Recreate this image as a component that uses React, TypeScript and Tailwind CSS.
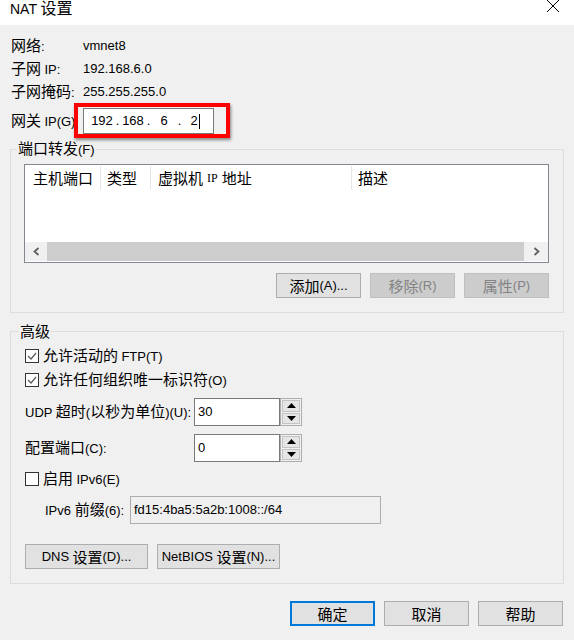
import React from 'react';

// Latin runs are drawn smaller than the CJK ones, like the Windows dialog font
const Lat: React.FC<{ children: React.ReactNode }> = ({ children }) => (
  <span className="font-['Liberation_Sans',sans-serif] text-[13px]">{children}</span>
);

const Check: React.FC<{ checked?: boolean }> = ({ checked }) => (
  <span className="w-[14px] h-[14px] border border-[#333333] bg-white flex items-center justify-center shrink-0">
    {checked && (
      <svg width="10" height="8" viewBox="0 0 10 8">
        <polyline points="1,4 4,7 9,1" fill="none" stroke="#5a5a5a" strokeWidth="1.2" />
      </svg>
    )}
  </span>
);

const Btn: React.FC<{ children: React.ReactNode; disabled?: boolean; primary?: boolean; w?: string }> = ({
  children,
  disabled,
  primary,
  w = 'w-[85px]',
}) => (
  <div
    className={
      w +
      ' h-[25px] flex items-center justify-center ' +
      (primary
        ? 'border-2 border-[#0078d7] bg-[#e1e1e1]'
        : disabled
        ? 'border border-[#bfbfbf] bg-[#cccccc] text-[#838383]'
        : 'border border-[#adadad] bg-[#e1e1e1]')
    }
  >
    {children}
  </div>
);

const Spin: React.FC<{ value: string }> = ({ value }) => (
  <div className="flex h-[28px]">
    <div className="w-[86px] h-full border border-[#7a7a7a] bg-white pl-[3px] pt-[2px] leading-[18px]">
      <Lat>{value}</Lat>
    </div>
    <div className="w-[22px] h-full border border-[#adadad] bg-[#f0f0f0] p-[1px] flex flex-col gap-[1px]">
      <div className="flex-1 border border-[#c4c4c4] bg-[#e5e5e5] flex items-center justify-center">
        <svg width="9" height="5" viewBox="0 0 9 5">
          <polygon points="0,5 9,5 4.5,0" fill="#000" />
        </svg>
      </div>
      <div className="flex-1 border border-[#c4c4c4] bg-[#e5e5e5] flex items-center justify-center">
        <svg width="9" height="5" viewBox="0 0 9 5">
          <polygon points="0,0 9,0 4.5,5" fill="#000" />
        </svg>
      </div>
    </div>
  </div>
);

export default function App() {
  return (
    <div className="w-[574px] h-[640px] bg-[#f0f0f0] overflow-hidden text-black font-['Noto_Sans_CJK_SC',sans-serif] text-[15px] leading-[20px]">
      {/* title bar */}
      <div className="h-[25px] bg-white flex justify-between">
        <div className="pl-[10px] -mt-[2px] text-[16px] leading-[18px]">
          <span className="font-['Liberation_Sans',sans-serif] text-[14px]">NAT</span> 设置
        </div>
        <svg width="14" height="14" viewBox="0 0 14 14" className="mr-[14px] -mt-[1px]">
          <line x1="1" y1="1" x2="13" y2="13" stroke="#000" strokeWidth="1" />
          <line x1="13" y1="1" x2="1" y2="13" stroke="#000" strokeWidth="1" />
        </svg>
      </div>

      {/* info rows */}
      <div className="pt-[9px] pl-[11px]">
        <div className="h-[23px] flex items-center">
          <span className="w-[72px]">网络<Lat>:</Lat></span>
          <Lat>vmnet8</Lat>
        </div>
        <div className="h-[23px] flex items-center">
          <span className="w-[72px]">子网 <Lat>IP:</Lat></span>
          <Lat>192.168.6.0</Lat>
        </div>
        <div className="h-[23px] flex items-center">
          <span className="w-[72px]">子网掩码<Lat>:</Lat></span>
          <Lat>255.255.255.0</Lat>
        </div>
        <div className="mt-[5px] h-[26px] flex items-center">
          <span className="w-[72px]">网关 <Lat>IP(G)</Lat></span>
          <div className="relative">
            <div className="w-[131px] h-[26px] border border-[#7a7a7a] bg-white flex items-center pl-[4px]">
              {['192', '168', '6', '2'].map((f, i) => (
                <React.Fragment key={i}>
                  <span className="w-[28px] text-center flex justify-center items-center">
                    <Lat>{f}</Lat>
                    {i === 3 && <span className="w-[1px] h-[15px] bg-black ml-[1px]" />}
                  </span>
                  {i < 3 && (
                    <span className="w-[3px] flex justify-center">
                      <Lat>.</Lat>
                    </span>
                  )}
                </React.Fragment>
              ))}
            </div>
            {/* red annotation frame */}
            <div className="absolute -left-[9px] -top-[5px] w-[156px] h-[35px] border-[4px] border-[#ff0000] shadow-[1px_2px_3px_rgba(0,0,0,0.45)]" />
          </div>
        </div>
      </div>

      {/* port forwarding */}
      <fieldset className="mt-[6px] mx-[10px] border border-[#dcdcdc]">
        <legend className="ml-[6px] px-[1px] leading-[16px]">
          端口转发<Lat>(F)</Lat>
        </legend>
        <div className="pt-[6px] pl-[13px] pr-[14px] pb-[14px]">
          <div className="h-[99px] border border-[#828790] bg-white flex flex-col">
            <div className="h-[26px] flex">
              <div className="w-[76px] pl-[8px] border-r border-[#e5e5e5] my-[1px] flex items-center">主机端口</div>
              <div className="w-[50px] pl-[6px] border-r border-[#e5e5e5] my-[1px] flex items-center">类型</div>
              <div className="w-[201px] pl-[7px] border-r border-[#e5e5e5] my-[1px] flex items-center">
                虚拟机 <span className="mx-[4px] font-['Liberation_Serif',serif] text-[12px]">IP</span>地址
              </div>
              <div className="flex-1 pl-[6px] my-[1px] flex items-center">描述</div>
            </div>
            <div className="flex-1" />
            <div className="h-[19px] mb-[1px] flex">
              <div className="w-[22px] bg-[#f0f0f0] flex items-center justify-center">
                <svg width="7" height="9" viewBox="0 0 7 9">
                  <polyline points="5.5,1 1.5,4.5 5.5,8" fill="none" stroke="#606060" strokeWidth="1.8" />
                </svg>
              </div>
              <div className="flex-1 bg-[#cdcdcd]" />
              <div className="w-[24px] bg-[#f0f0f0] flex items-center justify-center">
                <svg width="7" height="9" viewBox="0 0 7 9">
                  <polyline points="1.5,1 5.5,4.5 1.5,8" fill="none" stroke="#606060" strokeWidth="1.8" />
                </svg>
              </div>
            </div>
          </div>
          <div className="mt-[10px] flex justify-end gap-[9px]">
            <Btn>
              添加<Lat>(A)...</Lat>
            </Btn>
            <Btn disabled>
              移除<Lat>(R)</Lat>
            </Btn>
            <Btn disabled>
              属性<Lat>(P)</Lat>
            </Btn>
          </div>
        </div>
      </fieldset>

      {/* advanced */}
      <fieldset className="mt-[10px] mx-[10px] border border-[#dcdcdc]">
        <legend className="ml-[8px] px-[1px] leading-[16px]">高级</legend>
        <div className="pt-[5px] pl-[14px] pr-[14px] pb-[14px]">
          <div className="h-[24px] flex items-center gap-[4px]">
            <Check checked />
            <span>
              允许活动的 <Lat>FTP(T)</Lat>
            </span>
          </div>
          <div className="h-[24px] flex items-center gap-[4px]">
            <Check checked />
            <span>
              允许任何组织唯一标识符<Lat>(O)</Lat>
            </span>
          </div>
          <div className="mt-[6px] flex items-center">
            <span className="w-[169px]">
              <Lat>UDP </Lat>超时<Lat>(</Lat>以秒为单位<Lat>)(U):</Lat>
            </span>
            <Spin value="30" />
          </div>
          <div className="mt-[8px] flex items-center">
            <span className="w-[169px]">
              配置端口<Lat>(C):</Lat>
            </span>
            <Spin value="0" />
          </div>
          <div className="mt-[5px] h-[24px] flex items-center gap-[4px]">
            <Check />
            <span>
              启用 <Lat>IPv6(E)</Lat>
            </span>
          </div>
          <div className="mt-[5px] flex items-center pl-[20px]">
            <span className="w-[85px]">
              <Lat>IPv6 </Lat>前缀<Lat>(6):</Lat>
            </span>
            <div className="w-[251px] h-[28px] border border-[#adadad] bg-[#f0f0f0] pl-[3px] pt-[2px] leading-[18px]">
              <Lat>fd15:4ba5:5a2b:1008::/64</Lat>
            </div>
          </div>
          <div className="mt-[20px] flex gap-[9px]">
            <Btn w="w-[123px]">
              <Lat>DNS </Lat>&nbsp;设置<Lat>(D)...</Lat>
            </Btn>
            <Btn w="w-[123px]">
              <Lat>NetBIOS </Lat>&nbsp;设置<Lat>(N)...</Lat>
            </Btn>
          </div>
        </div>
      </fieldset>

      {/* dialog buttons */}
      <div className="mt-[17px] pr-[11px] flex justify-end gap-[9px]">
        <Btn primary>确定</Btn>
        <Btn>取消</Btn>
        <Btn>帮助</Btn>
      </div>
    </div>
  );
}
